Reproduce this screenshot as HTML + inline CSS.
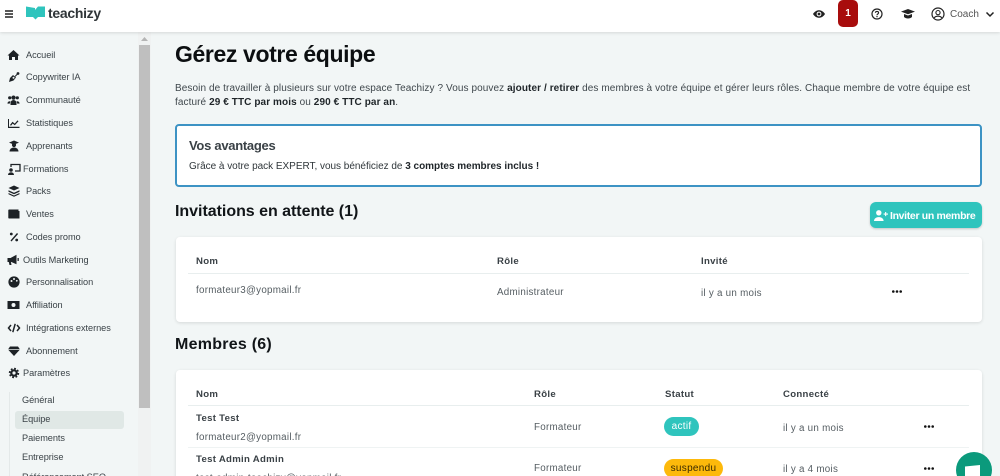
<!DOCTYPE html>
<html lang="fr"><head><meta charset="utf-8"><title>Teachizy</title>
<style>
html,body{margin:0;padding:0;width:1000px;height:476px;overflow:hidden;background:#f2f6f6;font-family:"Liberation Sans",sans-serif;color:#333b40}
#w{position:relative;width:1000px;height:476px;overflow:hidden;filter:blur(.3px)}
.a{position:absolute;white-space:nowrap}
.t{position:absolute;white-space:nowrap;line-height:14px;height:14px;font-size:9.2px;letter-spacing:-.05px;color:#3a4247}
.s{left:26px}.s2{left:23px}
.sub{left:22px;color:#3a4247}
.card{position:absolute;background:#fff;border-radius:4px;box-shadow:0 1px 3px rgba(0,0,0,.12)}
.h{font-weight:bold;color:#3a4146;font-size:9.6px;letter-spacing:.3px}
.g{color:#555d62;font-size:9.8px;letter-spacing:.26px}
.line{position:absolute;background:#e8eeee}
svg{position:absolute;display:block}
b{color:#1f2529}
</style></head><body><div id="w">
<!-- top bar -->
<div class="a" style="left:0;top:0;width:1000px;height:32px;background:#fff;box-shadow:0 1px 3px rgba(0,0,0,.12);z-index:3"></div>
<div style="position:absolute;left:0;top:0;width:1000px;height:40px;z-index:4">
<svg style="left:4px;top:9px" width="10" height="10" viewBox="0 0 10 10"><path d="M1 2h8M1 5h8M1 8h8" stroke="#222" stroke-width="1.4"/></svg>
<svg style="left:26px;top:6px" width="20" height="14" viewBox="0 0 20 14"><path d="M0 0.5L9 2V4L12 .5H19V11H12L9.5 13.5L7 11H0Z" fill="#2fc4bd"/></svg>
<div class="a" style="left:48px;top:5px;font-size:14px;line-height:16px;font-weight:bold;color:#2f3538;letter-spacing:-.3px">teachizy</div>
<svg style="left:813px;top:9px" width="12" height="10" viewBox="0 0 12 10"><path d="M0 5C3 0 9 0 12 5C9 10 3 10 0 5Z" fill="#222"/><circle cx="6" cy="5" r="2.4" fill="#fff"/><circle cx="6" cy="5" r="1.4" fill="#222"/></svg>
<div class="a" style="left:838px;top:0;width:20px;height:27px;background:#a80d0d;border-radius:5px;color:#fff;text-align:center;font-size:10px;font-weight:bold;line-height:27px">1</div>
<svg style="left:871px;top:8px" width="12" height="12" viewBox="0 0 12 12"><circle cx="6" cy="6" r="5" fill="none" stroke="#222" stroke-width="1.2"/><path d="M4.4 4.8C4.4 3 7.6 3 7.6 4.8C7.6 6 6 6 6 7.2" fill="none" stroke="#222" stroke-width="1.1"/><rect x="5.4" y="8" width="1.2" height="1.2" fill="#222"/></svg>
<svg style="left:901px;top:9px" width="14" height="10" viewBox="0 0 14 10"><path d="M7 0L14 2.6L7 5.2L0 2.6Z" fill="#222"/><path d="M3 5L7 6.5L11 5V8C9 10 5 10 3 8Z" fill="#222"/></svg>
<svg style="left:931px;top:7px" width="14" height="14" viewBox="0 0 14 14"><circle cx="7" cy="7" r="6" fill="none" stroke="#222" stroke-width="1.2"/><circle cx="7" cy="5.6" r="2.1" fill="none" stroke="#222" stroke-width="1.1"/><path d="M3.2 11C4.5 8.6 9.5 8.6 10.8 11" fill="none" stroke="#222" stroke-width="1.1"/></svg>
<div class="a" style="left:950px;top:8px;font-size:10px;line-height:14px;letter-spacing:0;color:#555">Coach</div>
<svg style="left:985px;top:11px" width="10" height="7" viewBox="0 0 10 7"><path d="M1.5 1.5L5 5L8.5 1.5" fill="none" stroke="#222" stroke-width="1.5"/></svg>
</div>
<!-- sidebar -->
<div class="a" style="left:138px;top:32px;width:13px;height:444px;background:#f0f2f2"></div>
<div class="a" style="left:139px;top:45px;width:11px;height:363px;background:#bfbfbf"></div>
<svg style="left:141px;top:37px" width="7" height="4" viewBox="0 0 7 4"><path d="M3.5 0L7 4H0Z" fill="#b5b5b5"/></svg>
<div class="t s" style="top:48px">Accueil</div>
<div class="t s" style="top:70px">Copywriter IA</div>
<div class="t s" style="top:93px">Communauté</div>
<div class="t s" style="top:116px">Statistiques</div>
<div class="t s" style="top:139px">Apprenants</div>
<div class="t s2" style="top:162px">Formations</div>
<div class="t s" style="top:184px">Packs</div>
<div class="t s" style="top:207px">Ventes</div>
<div class="t s" style="top:230px">Codes promo</div>
<div class="t s2" style="top:253px">Outils Marketing</div>
<div class="t s" style="top:275px">Personnalisation</div>
<div class="t s" style="top:298px">Affiliation</div>
<div class="t s" style="top:321px">Intégrations externes</div>
<div class="t s" style="top:344px">Abonnement</div>
<div class="t s2" style="top:366px">Paramètres</div>
<svg style="left:7px;top:40px" width="14" height="345" viewBox="0 0 14 345" fill="#1d2226">
<g transform="translate(0.5,9)"><path d="M6 1L12 6.5H10.5V11H7.5V8H4.5V11H1.5V6.5H0Z"/></g>
<g transform="translate(1,31)"><path d="M1 11L2 7L5 4L8 6.5L5.5 9.5L2.5 10.5Z"/><circle cx="5.5" cy="6.8" r="1" fill="#f2f6f6"/><circle cx="10" cy="2.5" r="1.4"/><path d="M7 5.5L9.5 3" stroke="#1d2226"/></g>
<g transform="translate(0.5,54)"><circle cx="2.2" cy="3.8" r="1.6"/><circle cx="9.8" cy="3.8" r="1.6"/><circle cx="6" cy="3.6" r="2.1"/><path d="M3 11V9a3 3 0 0 1 6 0v2Z"/><path d="M0 9a2.2 2.2 0 0 1 3-1.6L2.2 9.6H0ZM12 9a2.2 2.2 0 0 0-3-1.6l.8 2.2H12Z"/></g>
<g transform="translate(1,77)"><path d="M0 2H1V9.8H11.5V11H0Z"/><path d="M2 8L4.5 4.8L6.7 6.6L9.5 3.4L10.5 4.3L6.8 8.3L4.7 6.6L3 8.8Z"/></g>
<g transform="translate(1,100)"><path d="M6 0.5L11 2.6L6 4.6L1 2.6Z"/><circle cx="6" cy="5" r="2.1"/><path d="M1.5 11.5a4.5 4 0 0 1 9 0Z"/></g>
<g transform="translate(1,123)"><path d="M3 4V1.5H12V8H7" fill="none" stroke="#1d2226" stroke-width="1.3"/><circle cx="3" cy="7" r="1.8"/><path d="M0 12a3 2.8 0 0 1 6 0Z"/></g>
<g transform="translate(1,145)"><path d="M6 0.5L11.5 3L6 5.5L.5 3Z"/><path d="M.5 5.2L6 7.7L11.5 5.2V6.8L6 9.3L.5 6.8Z"/><path d="M.5 8L6 10.5L11.5 8V9.2L6 11.7L.5 9.2Z"/></g>
<g transform="translate(1,168)"><path d="M1 1.5H10.5V3H11.5V10.5H1A.8.8 0 0 1 .3 9.7V2.2A.8.8 0 0 1 1 1.5Z"/></g>
<g transform="translate(1.5,191)"><circle cx="2.8" cy="3" r="1.4"/><circle cx="8.2" cy="9" r="1.4"/><path d="M2 9.5L8.5 2L9.6 3L3 10.5Z"/></g>
<g transform="translate(0.5,214)"><path d="M0 4H3L9 .7V10.3L3.8 8H3.4L4 11H2L1.3 8H0Z"/><path d="M10 4h1.3v3H10Z"/></g>
<g transform="translate(1,236)"><circle cx="6" cy="6" r="5.6"/><circle cx="3.5" cy="5" r="1" fill="#f2f6f6"/><circle cx="6" cy="3" r="1" fill="#f2f6f6"/><circle cx="8.8" cy="4.8" r=".9" fill="#f2f6f6"/></g>
<g transform="translate(0.5,259)"><rect x="0" y="2" width="12" height="8"/><circle cx="6" cy="6" r="2" fill="#f2f6f6"/></g>
<g transform="translate(1,282)"><path d="M3 3L.5 6L3 9M9 3L11.5 6L9 9M7.2 1.8L4.8 10.2" fill="none" stroke="#1d2226" stroke-width="1.5"/></g>
<g transform="translate(1,305)"><path d="M2 1.5H10L12 4.5L6 11L0 4.5Z"/><path d="M0 4.5H12" stroke="#f2f6f6" stroke-width=".7"/></g>
<g transform="translate(1.5,327.5)"><circle cx="5.5" cy="5.5" r="3.8"/><circle cx="5.5" cy="5.5" r="4.4" fill="none" stroke="#1d2226" stroke-width="1.6" stroke-dasharray="1.8 1.65"/><circle cx="5.5" cy="5.5" r="1.6" fill="#f2f6f6"/></g>
</svg>
<div class="a" style="left:15px;top:411px;width:109px;height:18px;background:#e0e8e6;border-radius:3px"></div>
<div class="a" style="left:9px;top:392px;width:1px;height:84px;background:#e4e9e9"></div>
<div class="t sub" style="top:393px">Général</div>
<div class="t sub" style="top:412px">Équipe</div>
<div class="t sub" style="top:431px">Paiements</div>
<div class="t sub" style="top:450px">Entreprise</div>
<div class="t sub" style="top:470px">Référencement SEO</div>
<!-- main -->
<div class="a" style="left:175px;top:40px;font-size:23px;line-height:28px;font-weight:bold;color:#0c0f11;letter-spacing:-.38px">Gérez votre équipe</div>
<div class="t" style="left:175px;top:81px;font-size:10px;letter-spacing:.09px;color:#3f474c;transform:translateY(1px)">Besoin de travailler à plusieurs sur votre espace Teachizy ? Vous pouvez <b>ajouter / retirer</b> des membres à votre équipe et gérer leurs rôles. Chaque membre de votre équipe est</div>
<div class="t" style="left:175px;top:96px;font-size:10px;letter-spacing:.09px;color:#3f474c">facturé <b>29 € TTC par mois</b> ou <b>290 € TTC par an</b>.</div>
<div class="a" style="left:175px;top:124px;width:803px;height:59px;background:#fff;border:2px solid #3d93c4;border-radius:4px"></div>
<div class="a" style="left:189px;top:138px;font-size:13px;line-height:16px;font-weight:bold;color:#3a4146;letter-spacing:-.28px">Vos avantages</div>
<div class="t" style="left:189px;top:160px;font-size:10px;letter-spacing:-.02px;color:#2f363a">Grâce à votre pack EXPERT, vous bénéficiez de <b>3 comptes membres inclus !</b></div>
<div class="a" style="left:175px;top:202px;font-size:16px;line-height:20px;font-weight:bold;color:#111518;letter-spacing:-.03px">Invitations en attente (1)</div>
<div class="a" style="left:870px;top:202px;width:112px;height:26px;background:#2fc4bd;border-radius:6px;box-shadow:0 1px 2px rgba(0,0,0,.2)"></div>
<svg style="left:874px;top:210px" width="14" height="11" viewBox="0 0 14 11" fill="#fff"><circle cx="4.8" cy="2.8" r="2.7"/><path d="M0 11C0 5.8 9.6 5.8 9.6 11Z"/><path d="M9.6 3.5h1.5V2h1.1v1.5H14v1.1h-1.8v1.5h-1.1V4.6H9.6Z"/></svg>
<div class="a" style="left:890px;top:209px;font-size:10.5px;line-height:14px;font-weight:bold;color:#fff;letter-spacing:-.33px">Inviter un membre</div>
<div class="card" style="left:176px;top:237px;width:806px;height:85px"></div>
<div class="t h" style="left:196px;top:255px">Nom</div>
<div class="t h" style="left:497px;top:255px">Rôle</div>
<div class="t h" style="left:701px;top:255px">Invité</div>
<div class="line" style="left:188px;top:273px;width:781px;height:1px"></div>
<div class="t g" style="left:196px;top:284px">formateur3@yopmail.fr</div>
<div class="t g" style="left:497px;top:286px">Administrateur</div>
<div class="t g" style="left:701px;top:287px">il y a un mois</div>
<svg style="left:892px;top:290px" width="10" height="3" viewBox="0 0 10 3" fill="#111"><circle cx="1.3" cy="1.5" r="1.3"/><circle cx="5" cy="1.5" r="1.3"/><circle cx="8.7" cy="1.5" r="1.3"/></svg>
<div class="a" style="left:175px;top:335px;font-size:16px;line-height:20px;font-weight:bold;color:#111518;letter-spacing:.25px">Membres (6)</div>
<div class="card" style="left:176px;top:370px;width:806px;height:120px"></div>
<div class="t h" style="left:196px;top:388px">Nom</div>
<div class="t h" style="left:534px;top:388px">Rôle</div>
<div class="t h" style="left:665px;top:388px">Statut</div>
<div class="t h" style="left:783px;top:388px">Connecté</div>
<div class="line" style="left:188px;top:405px;width:781px;height:1px"></div>
<div class="line" style="left:188px;top:447px;width:781px;height:1px;background:#eff3f3"></div>
<div class="t h" style="left:196px;top:412px">Test Test</div>
<div class="t g" style="left:196px;top:431px">formateur2@yopmail.fr</div>
<div class="t g" style="left:534px;top:421px">Formateur</div>
<div class="a" style="left:664px;top:417px;width:35px;height:19px;border-radius:10px;background:#2fc4bd;color:#fff;text-align:center;font-size:10px;line-height:19px;letter-spacing:.3px">actif</div>
<div class="t g" style="left:783px;top:422px">il y a un mois</div>
<svg style="left:924px;top:425px" width="10" height="3" viewBox="0 0 10 3" fill="#111"><circle cx="1.3" cy="1.5" r="1.3"/><circle cx="5" cy="1.5" r="1.3"/><circle cx="8.7" cy="1.5" r="1.3"/></svg>
<div class="t h" style="left:196px;top:453px">Test Admin Admin</div>
<div class="t g" style="left:196px;top:472px">test-admin-teachizy@yopmail.fr</div>
<div class="t g" style="left:534px;top:462px">Formateur</div>
<div class="a" style="left:664px;top:459px;width:59px;height:19px;border-radius:10px;background:#fdb90b;color:#3a2a00;text-align:center;font-size:10px;line-height:19px;letter-spacing:.3px">suspendu</div>
<div class="t g" style="left:783px;top:463px">il y a 4 mois</div>
<svg style="left:924px;top:467px" width="10" height="3" viewBox="0 0 10 3" fill="#111"><circle cx="1.3" cy="1.5" r="1.3"/><circle cx="5" cy="1.5" r="1.3"/><circle cx="8.7" cy="1.5" r="1.3"/></svg>
<!-- chat -->
<div class="a" style="left:956px;top:452px;width:36px;height:36px;border-radius:50%;background:#0b9a7c"></div>
<svg style="left:965px;top:465px" width="16" height="11" viewBox="0 0 16 11"><path d="M0 1.5L15 0V11H0Z" fill="#fff"/></svg>
</div></body></html>
